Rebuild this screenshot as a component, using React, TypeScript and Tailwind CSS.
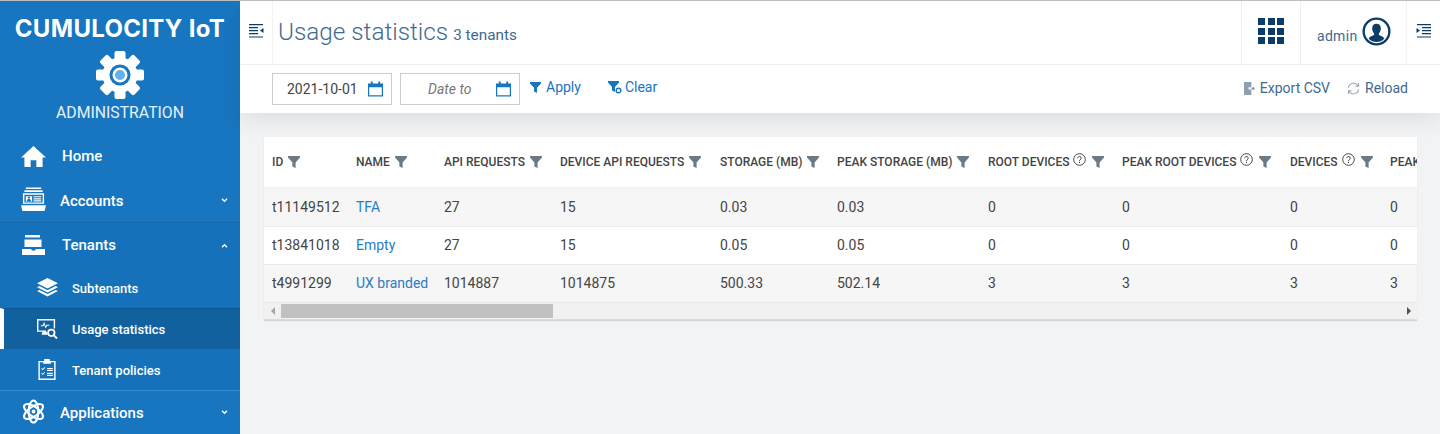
const rows = [
  ["t11149512", "TFA", "27", "15", "0.03", "0.03", "0", "0", "0", "0"],
  ["t13841018", "Empty", "27", "15", "0.05", "0.05", "0", "0", "0", "0"],
  ["t4991299", "UX branded", "1014887", "1014875", "500.33", "502.14", "3", "3", "3", "3"],
];

const columns = [
  { label: "ID", width: 84 },
  { label: "NAME", width: 88 },
  { label: "API REQUESTS", width: 116 },
  { label: "DEVICE API REQUESTS", width: 160 },
  { label: "STORAGE (MB)", width: 117 },
  { label: "PEAK STORAGE (MB)", width: 151 },
  { label: "ROOT DEVICES", width: 134, help: true },
  { label: "PEAK ROOT DEVICES", width: 168, help: true },
  { label: "DEVICES", width: 100, help: true },
  { label: "PEAK DEVICES", width: 140 },
];

function FilterIcon({ className = "" }: { className?: string }) {
  return (
    <svg viewBox="0 0 12 12" className={className} fill="currentColor">
      <path d="M0 0h12v1.600L7.600 6.400V12L4.400 10.400V6.400L0 1.600z" />
    </svg>
  );
}

function HelpIcon() {
  return (
    <svg viewBox="0 0 13 13" className="w-[13px] h-[13px] text-[#333] mb-[5px]" fill="none" stroke="currentColor">
      <circle cx="6.500" cy="6.500" r="5.800" strokeWidth="0.9" />
      <path d="M4.800 5.200a1.700 1.700 0 1 1 2.600 1.400c-.6.400-.9.700-.9 1.400M6.500 8.800v1.200" strokeWidth="1" />
    </svg>
  );
}

function CalendarIcon() {
  return (
    <svg viewBox="0 0 16 16" className="w-[15px] h-[16px] text-[#1776bf]" fill="currentColor">
      <path d="M3 0h2v2h6V0h2v2h3v14H0V2h3zM1.300 6v8.700h13.400V6z" />
    </svg>
  );
}

function MenuLines({ flip = false }: { flip?: boolean }) {
  return (
    <svg viewBox="0 0 15 14" className={`w-[15px] h-[14px] text-[#0d3d66] ${flip ? "-scale-x-100" : ""}`} fill="currentColor">
      <path d="M0 0h14v1.200H0zM0 3h9v1.200H0zM0 6h9v1.200H0zM0 9h9v1.200H0zM0 12.400h14v1.200H0zM14.500 4v5L11 6.500z" />
    </svg>
  );
}

function NavItem({ label, icon, chevron, className = "" }: { label: string; icon: React.ReactNode; chevron?: "up" | "down"; className?: string }) {
  return (
    <div className={`flex items-center h-[44px] pl-[19px] pr-[12px] text-white text-[15px] font-medium ${className}`}>
      <div className="w-[28px] flex justify-center shrink-0">{icon}</div>
      <span className="flex-1 ml-[15px]">{label}</span>
      {chevron && (
        <svg viewBox="0 0 8 6" className={`w-[7px] h-[5px] ${chevron === "up" ? "rotate-180" : ""}`} fill="none" stroke="white" strokeWidth="1.600">
          <path d="M1 1l3 3 3-3" />
        </svg>
      )}
    </div>
  );
}

function SubItem({ label, icon, active }: { label: string; icon: React.ReactNode; active?: boolean }) {
  return (
    <div
      className={`flex items-center h-[41px] text-white text-[13px] font-medium ${
        active ? "bg-[#12619f] border-l-4 border-white pl-[31px] border-t border-t-[#0f5690]" : "pl-[35px]"
      }`}
    >
      <div className="w-[24px] flex justify-center shrink-0">{icon}</div>
      <span className="ml-[13px] mt-[2px]">{label}</span>
    </div>
  );
}

export default function App() {
  return (
    <div className="flex h-[434px] w-[1440px] overflow-hidden border-t border-[#bdbdbd] bg-[#f2f3f5] font-['Roboto',sans-serif]">
      {/* Sidebar */}
      <aside className="w-[240px] shrink-0 bg-[#1776bf] flex flex-col">
        <div className="flex flex-col items-center h-[134px]">
          <div className="mt-[12px] text-white text-[24px] leading-[32px] font-bold font-['Inter',sans-serif] tracking-[0.3px] whitespace-nowrap">
            CUMULOCITY IoT
          </div>
          <svg viewBox="0 0 48 48" className="w-[48px] h-[48px] mt-[6px]">
            {[0, 45, 90, 135, 180, 225, 270, 315].map((a) => (
              <rect key={a} x="18.500" y="0" width="11" height="12" rx="2" fill="white" transform={`rotate(${a} 24 24)`} />
            ))}
            <circle cx="24" cy="24" r="17.500" fill="white" />
            <circle cx="24" cy="24" r="10.500" fill="#1776bf" />
            <circle cx="24" cy="24" r="7.500" fill="white" />
            <circle cx="24" cy="24" r="5" fill="#63b0ee" />
          </svg>
          <div className="mt-[4px] text-[#e6f1fa] text-[15.8px] leading-[20px]">ADMINISTRATION</div>
        </div>
        <NavItem
          label="Home"
          icon={
            <svg viewBox="0 0 26 22" className="w-[25px] h-[21px]" fill="white">
              <path d="M13 0l13 12h-3.500v10h-6.500v-7h-6v7H3.500V12H0z" />
            </svg>
          }
        />
        <NavItem
          label="Accounts"
          chevron="down"
          className="[&>span]:ml-[13px] [&>span]:mt-[2px]"
          icon={
            <svg viewBox="0 0 26 25" className="w-[25px] h-[25px] mb-[1px]" fill="white">
              <path d="M5 0h16v1.600H5zM3.500 3h19v1.600h-19zM2 6h22v11H2zM3.500 7.600v7.900h19V7.600zM5 9h6.500v5.500H5zM13 9h8v1.200h-8zM13 11.200h8v1.200h-8zM13 13.400h8v1.200h-8zM0 18.500h26l-1.500 6h-23z" />
              <circle cx="8.200" cy="10.500" r="1.200" fill="#1776bf" />
              <path d="M6 14.500c0-2 1-2.500 2.200-2.500s2.300.5 2.300 2.500z" fill="#1776bf" />
            </svg>
          }
        />
        <div className="bg-[#1572ba] border-t border-[#1469ab]">
          <NavItem
            label="Tenants"
            chevron="up"
            icon={
              <svg viewBox="0 0 23 20" className="w-[23px] h-[20px]" fill="white">
                <path d="M3 0h15v2.500H3zM2.500 4.500h17V12h-17zM0 14h9l1 1.500h3l1-1.500h9v6H0z" />
              </svg>
            }
          />
          <SubItem
            label="Subtenants"
            icon={
              <svg viewBox="0 0 22 20" className="w-[21px] h-[19px]" fill="white">
                <path d="M11 0l11 5.500-11 5.500L0 5.500zM2.500 8.500L11 12.800l8.500-4.300 2.500 1.300-11 5.500L0 9.800zM2.500 12.500L11 16.800l8.500-4.300 2.500 1.300L11 19.500 0 13.800z" />
              </svg>
            }
          />
          <SubItem
            label="Usage statistics"
            active
            icon={
              <svg viewBox="0 0 22 21" className="w-[21px] h-[20px]" fill="white">
                <path fillRule="evenodd" d="M0 0h19v10h-1.500V1.500h-16v10.500h8v1.500H0zM4 6.500h2L7.500 3 9 7.500l1-1.500h3v1.200h-2.300L9 10 7.500 6 6.600 7.700H4zM5 15.500c0-1.500 1-2 2-2h2c1 0 2 .5 2 2v1H5z" />
                <circle cx="15" cy="14.500" r="3.400" fill="none" stroke="white" strokeWidth="1.800" />
                <path d="M17.500 17l3.500 3.500" fill="none" stroke="white" strokeWidth="2" />
              </svg>
            }
          />
          <SubItem
            label="Tenant policies"
            icon={
              <svg viewBox="0 0 18 22" className="w-[18px] h-[21px]" fill="white">
                <path fillRule="evenodd" d="M6 0h6v2h6v20H0V2h6zM1.500 3.500v17h15v-17H13V5H5V3.500z" />
                <path d="M3.500 9.500l1 1 2-2 .6.6L4.500 11.700 3 10.100zM3.500 14.500l1 1 2-2 .6.6L4.500 16.700 3 15.100zM9 9.500h6v1.200H9zM9 11.500h6v1.200H9zM9 14.500h6v1.200H9zM9 16.500h6v1.200H9z" />
              </svg>
            }
          />
        </div>
        <NavItem
          label="Applications"
          chevron="down"
          className="border-t border-[#3a8bcb] [&>span]:ml-[13px] [&>span]:mt-[2px]"
          icon={
            <svg viewBox="0 0 26 26" className="w-[25px] h-[25px] mb-[2px]" fill="none" stroke="white" strokeWidth="2.200">
              <ellipse cx="13" cy="13" rx="11.500" ry="5" transform="rotate(35 13 13)" />
              <ellipse cx="13" cy="13" rx="11.500" ry="5" transform="rotate(-35 13 13)" />
              <ellipse cx="13" cy="13" rx="11.500" ry="5" transform="rotate(90 13 13)" />
              <circle cx="13" cy="13" r="2" fill="white" stroke="none" />
            </svg>
          }
        />
      </aside>

      {/* Main column */}
      <div className="flex-1 min-w-0 flex flex-col">
        <header className="bg-white shadow-[0_8px_20px_rgba(0,0,0,0.08)]">
          <div className="flex h-[64px] border-b border-[#eff0f1] items-stretch">
            <div className="w-[33px] flex items-center justify-center border-r border-[#f2f2f2] pb-[4px]">
              <MenuLines />
            </div>
            <div className="flex-1 flex items-baseline pl-[5px] pt-[13px] text-[#3f6a8f]">
              <span className="text-[24.3px] leading-[36px] font-light">Usage statistics</span>
              <span className="ml-[5px] text-[15.3px]">3 tenants</span>
            </div>
            <div className="w-[60px] -ml-px flex items-center justify-center border-x border-[#f0f0f0] pb-[3px]">
              <div className="grid grid-cols-3 gap-[2.500px]">
                {Array.from({ length: 9 }).map((_, i) => (
                  <div key={i} className="w-[7px] h-[7px] bg-[#0d3d66]" />
                ))}
              </div>
            </div>
            <div className="w-[105px] flex items-center pl-[16px] text-[#3f6a8f] text-[14px] tracking-[0.3px]">
              <span className="mt-[7px]">admin</span>
              <svg viewBox="0 0 30 30" className="w-[29px] h-[29px] ml-[5px] mb-[3px] text-[#0d3d66]" fill="none">
                <circle cx="15" cy="15" r="13.300" stroke="currentColor" strokeWidth="2.400" />
                <path
                  fill="currentColor"
                  d="M15 7c3 0 4.500 2 4.500 5 0 2-1 4-2 5v1.500c2 1 5 1.500 5.500 4a11 11 0 0 1-16 0c.5-2.500 3.500-3 5.500-4V17c-1-1-2-3-2-5 0-3 1.500-5 4.500-5z"
                />
              </svg>
            </div>
            <div className="w-[34px] flex items-center justify-center border-l border-[#f2f2f2] pb-[4px]">
              <MenuLines flip />
            </div>
          </div>
          <div className="flex items-center h-[48px] pl-[32px] pr-[32px]">
            <div className="w-[120px] h-[32px] border border-[#ccc] flex items-center pl-[14px] pr-[8px] justify-between text-[14px] text-[#444]">
              2021-10-01
              <CalendarIcon />
            </div>
            <div className="w-[120px] h-[32px] ml-[8px] border border-[#ccc] flex items-center pl-[27px] pr-[8px] justify-between text-[14px] italic text-[#777]">
              Date to
              <CalendarIcon />
            </div>
            <div className="ml-[10px] flex items-center text-[14px] text-[#1776bf] pb-[4px]">
              <FilterIcon className="w-[11px] h-[11px]" />
              <span className="ml-[5px]">Apply</span>
            </div>
            <div className="ml-[27px] flex items-center text-[14px] text-[#1776bf] pb-[4px]">
              <svg viewBox="0 0 14 13" className="w-[14px] h-[13px]" fill="currentColor">
                <path d="M0 0h11v1.500L7 6v5L4 9.500V6L0 1.500z" />
                <circle cx="10.500" cy="9.500" r="2.300" fill="none" stroke="currentColor" strokeWidth="1.400" />
              </svg>
              <span className="ml-[3px]">Clear</span>
            </div>
            <div className="ml-auto flex items-center text-[14px] text-[#3f6a8f] pb-[2px]">
              <svg viewBox="0 0 12 14" className="w-[11px] h-[13px] text-[#8ba0b2]" fill="currentColor">
                <path d="M0 0h8v5.500H5V8h3v6H0zM8 6h2V4.500l2 2.500-2 2.500V8H8z" />
              </svg>
              <span className="ml-[5px]">Export CSV</span>
              <svg viewBox="0 0 14 14" className="w-[13px] h-[13px] ml-[17px] text-[#9aa4ad]" fill="none" stroke="currentColor" strokeWidth="1.100">
                <path d="M1.500 6A5.500 5.500 0 0 1 11 3l1.500 1.500M12.500 1v3.500H9M12.500 8A5.500 5.500 0 0 1 3 11L1.500 9.500M1.500 13V9.500H5" />
              </svg>
              <span className="ml-[5px]">Reload</span>
            </div>
          </div>
        </header>

        <main className="px-[24px] pt-[24px]">
          <div className="w-[1153px] bg-white shadow-[0_1px_1px_rgba(0,0,0,0.12)] overflow-hidden">
            <table className="table-fixed w-[1258px] text-left">
              <colgroup>
                {columns.map((c) => (
                  <col key={c.label} style={{ width: c.width }} />
                ))}
              </colgroup>
              <thead>
                <tr className="h-[51px] border-b-2 border-[#f2f2f2]">
                  {columns.map((c) => (
                    <th key={c.label} className="pl-[8px] text-[12px] font-medium text-[#444] whitespace-nowrap overflow-hidden">
                      <div className="flex items-center">
                        {c.label}
                        {c.help && <span className="ml-[4px] flex"><HelpIcon /></span>}
                        <FilterIcon className={`w-[12px] h-[12px] text-[#6c7a85] ${c.help ? "ml-[6px]" : "ml-[5px]"}`} />
                      </div>
                    </th>
                  ))}
                </tr>
              </thead>
              <tbody>
                {rows.map((row, i) => (
                  <tr key={row[0]} className={`h-[38px] border-b border-[#e9e9e9] text-[14px] text-[#444] ${i % 2 === 0 ? "bg-[#f6f6f6]" : "bg-white"}`}>
                    {row.map((cell, j) => (
                      <td key={j} className={`pl-[8px] whitespace-nowrap ${j === 1 ? "text-[#2b7cc4]" : ""}`}>
                        {cell}
                      </td>
                    ))}
                  </tr>
                ))}
              </tbody>
            </table>
            {/* Horizontal scroll bar */}
            <div className="flex items-center h-[17px] bg-[#f1f1f1] border-b border-[#dcdcdc]">
              <div className="w-[17px] flex justify-center">
                <div className="w-0 h-0 border-y-[4px] border-y-transparent border-r-[4px] border-r-[#a3a3a3]" />
              </div>
              <div className="w-[272px] h-[14px] bg-[#c1c1c1]" />
              <div className="ml-auto w-[17px] flex justify-center">
                <div className="w-0 h-0 border-y-[4px] border-y-transparent border-l-[4px] border-l-[#505050]" />
              </div>
            </div>
          </div>
        </main>
      </div>
    </div>
  );
}
